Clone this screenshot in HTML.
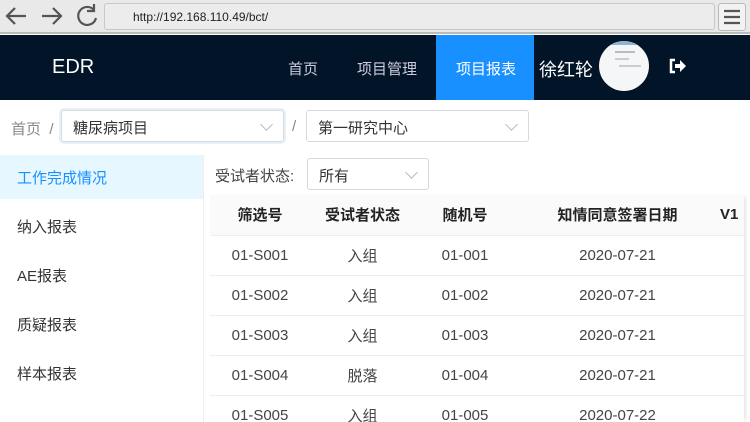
<!DOCTYPE html>
<html><head><meta charset="utf-8"><style>
*{margin:0;padding:0;box-sizing:border-box}
body{width:750px;height:422px;overflow:hidden;background:#fff;font-family:"Liberation Sans","Noto Sans CJK SC",sans-serif;position:relative}
.a{position:absolute}
.bar{left:0;top:0;width:750px;height:34px;background:#e9e9e9;border-bottom:2px solid #bbb}
.url{left:104px;top:3px;width:611px;height:27px;background:#ececec;border:1px solid #c8c8c8;border-radius:3px;font-size:12px;color:#222;padding:6px 0 0 28px}
.nav{left:0;top:35px;width:750px;height:65px;background:#021428;color:#fff}
.sel{border:1px solid #d9d9d9;border-radius:3px;font-size:15px;color:#333;padding:6px 0 0 11px;height:32px}
.chev{position:absolute;right:12px;top:9px;width:9px;height:9px;border-right:1px solid #bbb;border-bottom:1px solid #bbb;transform:rotate(45deg)}
.side{font-size:15px;color:#333;left:0;width:203px;height:49px;padding:14px 0 0 17px}
table{border-collapse:collapse;font-size:15px;color:#444}
td,th{height:40px;text-align:center;border-bottom:1px solid #eee;font-weight:normal}
th{background:#fafafa;color:#222;font-weight:600}
</style></head><body>
<div class="a bar"></div>
<svg class="a" style="left:0;top:0" width="110" height="33" viewBox="0 0 110 33" fill="none" stroke="#555" stroke-width="2.2">
<path d="M26 16H8M15 8l-8 8 8 8"/><path d="M42 16h18M53 8l8 8-8 8"/>
<path d="M94 10a9 9 0 1 0 2 8M94 4v7h-7" /></svg>
<div class="a url">http://192.168.110.49/bct/</div>
<div class="a" style="left:718px;top:3px;width:28px;height:28px;border:1px solid #bbb;border-radius:3px;background:#f2f2f2"></div>
<svg class="a" style="left:723px;top:8px" width="18" height="18"><path d="M1 3h16M1 9h16M1 15h16" stroke="#555" stroke-width="2.2"/></svg>
<div class="a nav">
<div class="a" style="left:52px;top:21px;font-size:20px">EDR</div>
<div class="a" style="left:288px;top:23px;font-size:15px;color:#ccd">首页</div>
<div class="a" style="left:357px;top:23px;font-size:15px;color:#ccd">项目管理</div>
<div class="a" style="left:436px;top:0;width:98px;height:65px;background:#1890ff"></div>
<div class="a" style="left:456px;top:23px;font-size:15px">项目报表</div>
<div class="a" style="left:539px;top:21px;font-size:18px">徐红轮</div>
<div class="a" style="left:599px;top:6px;width:50px;height:50px;border-radius:50%;background:#f4f6f8;overflow:hidden">
<div style="height:4px;background:#8fb3d8"></div><div style="margin:6px 0 0 16px;width:20px;height:2px;background:#bbb"></div><div style="margin:5px 0 0 16px;width:14px;height:2px;background:#ccc"></div><div style="margin:5px 0 0 20px;width:22px;height:2px;background:#ccc"></div></div>
<svg class="a" style="left:669px;top:23px" width="18" height="16" viewBox="0 0 18 16"><path d="M6 2H2v12h4" stroke="#fff" stroke-width="2.5" fill="none"/><path d="M6 6h5V2l6 6-6 6v-4H6z" fill="#fff"/></svg>
</div>
<div class="a" style="left:11px;top:118px;font-size:15px;color:#888">首页 &nbsp;/</div>
<div class="a sel" style="left:61px;top:110px;width:223px;box-shadow:0 0 0 2px #e6f1fb">糖尿病项目<span class="chev"></span></div>
<div class="a" style="left:292px;top:118px;font-size:15px;color:#888">/</div>
<div class="a sel" style="left:306px;top:110px;width:223px">第一研究中心<span class="chev"></span></div>
<div class="a" style="left:203px;top:155px;width:1px;height:267px;background:#eee"></div>
<div class="a side" style="top:155px;background:#e6f7ff;color:#1890ff;height:44px;padding-top:12px">工作完成情况</div>
<div class="a side" style="top:202px">纳入报表</div>
<div class="a side" style="top:251px">AE报表</div>
<div class="a side" style="top:300px">质疑报表</div>
<div class="a side" style="top:349px">样本报表</div>
<div class="a" style="left:215px;top:165px;font-size:15px;color:#444">受试者状态:</div>
<div class="a sel" style="left:307px;top:158px;width:122px">所有<span class="chev"></span></div>
<div class="a" style="left:210px;top:195px;width:534px;height:227px;overflow:hidden;box-shadow:3px 0 4px -2px rgba(0,0,0,.15)">
<table style="width:550px">
<tr><th style="width:100px">筛选号</th><th style="width:105px">受试者状态</th><th style="width:100px">随机号</th><th style="width:205px">知情同意签署日期</th><th style="text-align:left">V1</th></tr>
<tr><td>01-S001</td><td>入组</td><td>01-001</td><td>2020-07-21</td><td></td></tr>
<tr><td>01-S002</td><td>入组</td><td>01-002</td><td>2020-07-21</td><td></td></tr>
<tr><td>01-S003</td><td>入组</td><td>01-003</td><td>2020-07-21</td><td></td></tr>
<tr><td>01-S004</td><td>脱落</td><td>01-004</td><td>2020-07-21</td><td></td></tr>
<tr><td>01-S005</td><td>入组</td><td>01-005</td><td>2020-07-22</td><td></td></tr>
</table></div>
</body></html>
